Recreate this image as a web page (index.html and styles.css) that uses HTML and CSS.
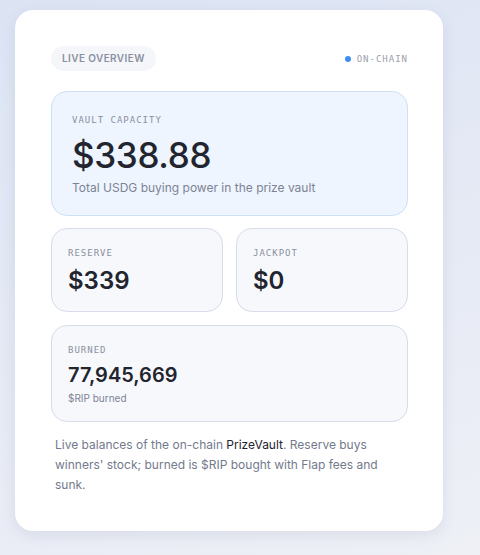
FILE: index.html
```html
<!DOCTYPE html>
<html lang="en">
<head>
    <meta charset="UTF-8">
    <meta name="viewport" content="width=device-width, initial-scale=1.0">
    <title>Live Overview</title>
    <link rel="stylesheet" href="styles.css">
</head>
<body>
    <div class="panel">
        <div class="panel-head">
            <span class="pill">LIVE OVERVIEW</span>
            <span class="status"><span class="dot"></span>ON-CHAIN</span>
        </div>

        <div class="stat stat-main">
            <div class="label">VAULT CAPACITY</div>
            <div class="value value-lg">$338.88</div>
            <div class="sub">Total USDG buying power in the prize vault</div>
        </div>

        <div class="stat-row">
            <div class="stat">
                <div class="label">RESERVE</div>
                <div class="value value-md">$339</div>
            </div>
            <div class="stat">
                <div class="label">JACKPOT</div>
                <div class="value value-md">$0</div>
            </div>
        </div>

        <div class="stat stat-burn">
            <div class="label">BURNED</div>
            <div class="value value-sm">77,945,669</div>
            <div class="sub sub-sm">$RIP burned</div>
        </div>

        <p class="note">Live balances of the on-chain <span class="strong">PrizeVault</span>. Reserve buys winners' stock; burned is $RIP bought with Flap fees and sunk.</p>
    </div>
</body>
</html>
```

FILE: styles.css
```css
html, body {
    height: 100%;
}
body {
    margin: 0;
    font-family: Inter, "Noto Sans", sans-serif;
    background: linear-gradient(160deg, #dce4f4 0%, #e6eaf5 55%, #eef0f6 100%);
    color: #1e2230;
}
.panel {
    width: 428px;
    box-sizing: border-box;
    margin: 10px 0 0 15px;
    padding: 36px 35px 36px 36px;
    background: #ffffff;
    border-radius: 18px;
    box-shadow: 0 4px 14px rgba(60, 70, 110, 0.10);
}
.panel-head {
    display: flex;
    justify-content: space-between;
    align-items: center;
    margin-bottom: 20px;
}
.pill {
    display: inline-block;
    padding: 0 11px;
    height: 25px;
    line-height: 25px;
    border-radius: 13px;
    background: #f4f6fa;
    color: #8b90a0;
    font-size: 10px;
    font-weight: 600;
    letter-spacing: 0.04em;
}
.status {
    display: flex;
    align-items: center;
    gap: 6px;
    font-family: "DejaVu Sans Mono", monospace;
    font-size: 9px;
    letter-spacing: 1px;
    color: #9aa0ae;
}
.dot {
    width: 6px;
    height: 6px;
    border-radius: 50%;
    background: #3b8ef5;
}
.stat {
    box-sizing: border-box;
    border: 1px solid #d6dcea;
    border-radius: 16px;
    background: #f7f8fc;
    padding: 18px 16px 0;
}
.stat-main {
    background: #eef5fe;
    border-color: #cfe0f6;
    height: 125px;
    padding: 22px 20px 0;
}
.stat-row {
    display: grid;
    grid-template-columns: 1fr 1fr;
    gap: 13px;
    margin: 12px 0 13px;
}
.stat-row .stat {
    height: 84px;
}
.stat-burn {
    height: 97px;
}
.label {
    font-family: "DejaVu Sans Mono", monospace;
    font-size: 9px;
    letter-spacing: 1px;
    color: #8a90a0;
    line-height: 12px;
}
.value {
    color: #22252f;
    font-weight: 600;
}
.value-lg {
    font-size: 35px;
    font-weight: 500;
    line-height: 44px;
    margin-top: 7px;
    letter-spacing: -0.01em;
}
.value-md {
    font-size: 24px;
    line-height: 30px;
    margin-top: 7px;
}
.value-sm {
    font-size: 20px;
    line-height: 26px;
    margin-top: 6px;
}
.sub {
    font-size: 12px;
    color: #7c8395;
    margin-top: 3px;
}
.sub-sm {
    font-size: 10px;
    margin-top: 4px;
}
.note {
    margin: 13px 0 0 4px;
    font-size: 12px;
    line-height: 20px;
    color: #737a8c;
}
.strong {
    color: #1e2230;
}
```
